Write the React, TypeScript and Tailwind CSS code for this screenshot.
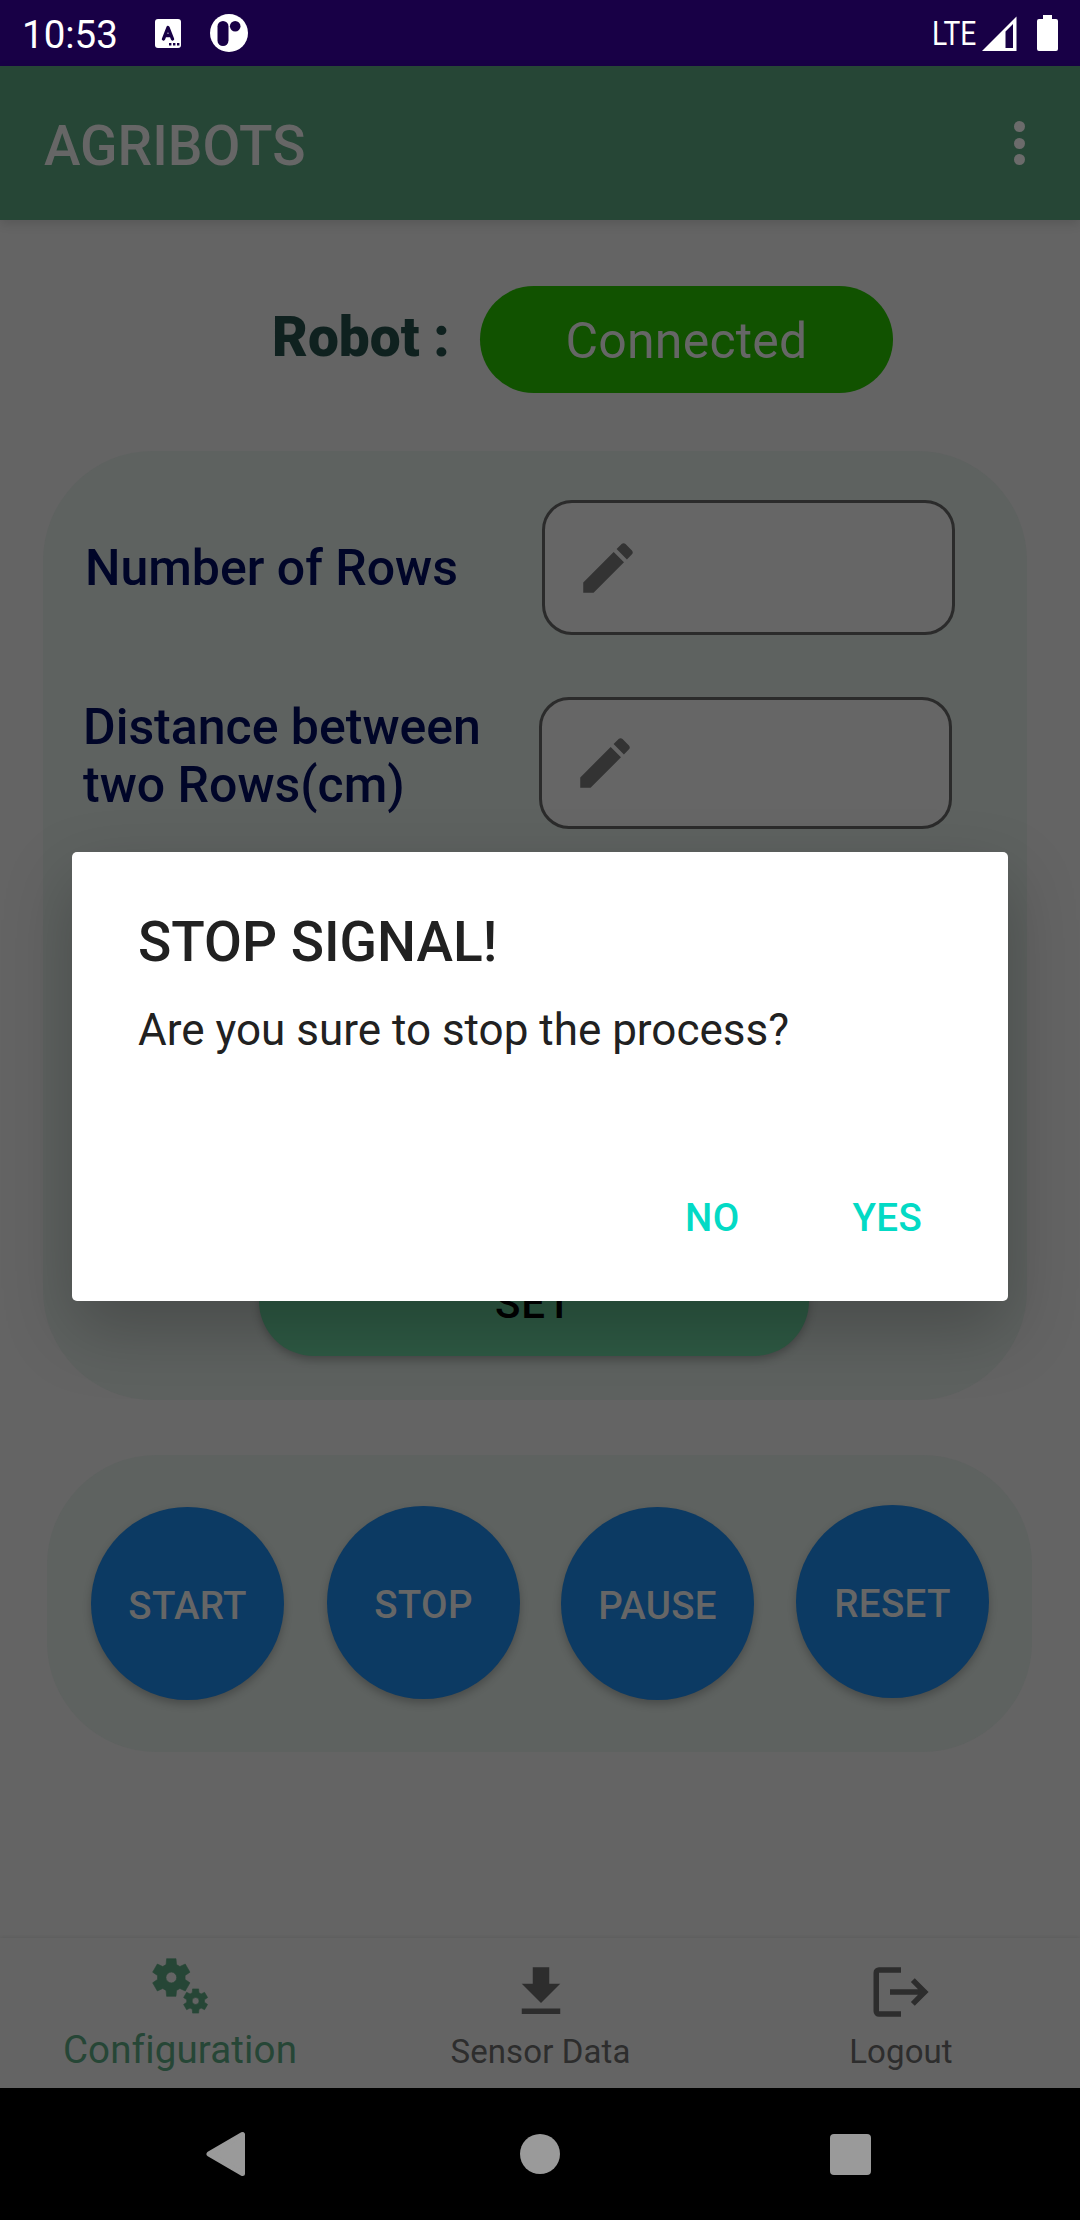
import type { ReactNode } from "react";

/** Outline of a six-toothed gear centred on (cx, cy), scaled by s. */
function gearPath(cx: number, cy: number, s: number) {
  const points: string[] = [];
  const corners: [number, number][] = [
    [14.2, -22],
    [19.8, -14],
    [19.8, 14],
    [14.2, 22],
  ];
  for (let tooth = 0; tooth < 6; tooth++) {
    for (const [r, a] of corners) {
      const t = ((tooth * 60 + a) * Math.PI) / 180;
      points.push(`${(cx + s * r * Math.sin(t)).toFixed(2)} ${(cy - s * r * Math.cos(t)).toFixed(2)}`);
    }
  }
  const h = 5.5 * s;
  return `M${points.join("L")}ZM${cx - h} ${cy}a${h} ${h} 0 1 0 ${2 * h} 0a${h} ${h} 0 1 0 ${-2 * h} 0Z`;
}

function Pencil() {
  return (
    <svg viewBox="0 0 24 24" className="size-[66px] fill-[#333333]">
      <path d="M3 17.25V21h3.75L17.81 9.94l-3.75-3.75L3 17.25zM20.71 7.04c.39-.39.39-1.02 0-1.41l-2.34-2.34c-.39-.39-1.02-.39-1.41 0l-1.83 1.83 3.75 3.75 1.83-1.83z" />
    </svg>
  );
}

function StatusBar() {
  return (
    <div className="flex h-[66px] items-center bg-[#180046] text-white">
      <span className="ml-[22px] w-[98px] pt-[4px] text-[38.5px] leading-none whitespace-nowrap">10:53</span>
      <svg viewBox="0 0 26 29" className="ml-[35px] h-[29px] w-[26px]">
        <rect width="26" height="29" rx="3" fill="white" />
        <path d="M8.5 20 13 8.5 17.5 20M10 16.5h6" fill="none" stroke="#180046" strokeWidth="3.4" strokeLinejoin="round" strokeLinecap="round" />
        <path d="M14 24h2.4v2.4H14zM18 24h2.4v2.4H18zM22 24h2.4v2.4H22z" fill="#180046" />
      </svg>
      <svg viewBox="0 0 38 38" className="ml-[29px] size-[38px]">
        <circle cx="19" cy="19" r="19" fill="white" />
        <rect x="7.5" y="7" width="11" height="25" rx="5.5" fill="#180046" />
        <circle cx="25.2" cy="12.3" r="5.3" fill="#180046" />
      </svg>
      <span className="ml-auto w-[50.5px] origin-left scale-x-[0.83] text-[34px] leading-none">LTE</span>
      <svg viewBox="0 0 35 35" className="h-[35px] w-[35px]">
        <path fillRule="evenodd" d="M0 35 34.5 0.5V35ZM23.5 15.5 31 8V32H23.5Z" fill="white" />
      </svg>
      <svg viewBox="0 0 21 36" className="mr-[22px] ml-[20px] h-[36px] w-[21px]">
        <path d="M6 0h9v4h4a2 2 0 0 1 2 2v28a2 2 0 0 1-2 2H2a2 2 0 0 1-2-2V6a2 2 0 0 1 2-2h4z" fill="white" />
      </svg>
    </div>
  );
}

function AppBar() {
  return (
    <header className="z-10 flex h-[154px] items-center justify-between bg-[#264636] pr-[55px] pl-[44px] text-[#666666] shadow-[0_4px_10px_rgba(0,0,0,0.12)]">
      <h1 className="pt-[6px] text-[55px] leading-none font-medium">AGRIBOTS</h1>
      <div className="flex flex-col gap-[5.5px]">
        <span className="size-[11px] rounded-full bg-[#6b6b6b]" />
        <span className="size-[11px] rounded-full bg-[#6b6b6b]" />
        <span className="size-[11px] rounded-full bg-[#6b6b6b]" />
      </div>
    </header>
  );
}

function RoundButton({ children, className }: { children: ReactNode; className: string }) {
  return (
    <button
      className={`flex size-[193px] shrink-0 items-center justify-center rounded-full bg-[#0c3a63] pt-[4px] text-[38.5px] font-medium tracking-[0.3px] text-[#666666] shadow-[0_4px_8px_rgba(0,0,0,0.24)] ${className}`}
    >
      {children}
    </button>
  );
}

function BottomNav() {
  return (
    <nav className="grid h-[150px] grid-cols-3 bg-[#646464] text-[33px] leading-[40px] text-[#2d2d2d] shadow-[0_-1px_3px_rgba(0,0,0,0.07)]">
      <div className="flex flex-col items-center text-[#264636]">
        <svg viewBox="0 0 66 66" className="mt-[15px] size-[66px]">
          <path
            fillRule="evenodd"
            fill="currentColor"
            stroke="currentColor"
            strokeWidth="0.6"
            strokeLinejoin="round"
            d={gearPath(24.3, 24.5, 0.98) + gearPath(48.6, 48, 0.63)}
          />
        </svg>
        <span className="mt-[11px] text-[38.5px] tracking-[0.15px]">Configuration</span>
      </div>
      <div className="flex flex-col items-center">
        <svg viewBox="0 0 24 24" className="mt-[21px] ml-px size-[66px] fill-current">
          <path d="M19 9h-4V3H9v6H5l7 7 7-7zM5 18v2h14v-2H5z" />
        </svg>
        <span className="mt-[7px] ml-px tracking-[0.1px]">Sensor Data</span>
      </div>
      <div className="flex flex-col items-center">
        <svg viewBox="0 0 24 24" className="mt-[21px] ml-px size-[66px] fill-none stroke-current stroke-2">
          <path d="M12 4H4A1 1 0 0 0 3 5V19A1 1 0 0 0 4 20H12M8 12H20.3M16.3 7.7 20.6 12 16.3 16.3" />
        </svg>
        <span className="mt-[7px] ml-[2px] tracking-[0.1px]">Logout</span>
      </div>
    </nav>
  );
}

function SystemNav() {
  return (
    <div className="flex h-[132px] items-center bg-black text-[#9a9a9a]">
      <svg viewBox="0 0 40 46" className="ml-[206px] h-[46px] w-[40px]">
        <path d="M3 23 36.5 3.5V42.5Z" fill="currentColor" stroke="currentColor" strokeWidth="5" strokeLinejoin="round" />
      </svg>
      <span className="ml-[274px] size-[40px] rounded-full bg-[#9a9a9a]" />
      <span className="mt-[1px] ml-[270px] size-[41px] rounded-[4px] bg-[#9a9a9a]" />
    </div>
  );
}

function StopDialog() {
  return (
    <div
      role="dialog"
      className="absolute top-[852px] left-[72px] z-20 flex h-[449px] w-[936px] flex-col rounded-[5px] bg-white text-[#212121] shadow-[0_28px_70px_rgba(0,0,0,0.24)]"
    >
      <h2 className="mt-[58px] ml-[66px] text-[55px] leading-[64px] font-medium">STOP SIGNAL!</h2>
      <p className="mt-[30px] ml-[66px] text-[44px] leading-[52px]">Are you sure to stop the process?</p>
      <div className="mt-auto mr-[86px] mb-[60px] flex justify-end gap-[113px] text-[38.5px] leading-[46px] font-medium tracking-[0.3px] text-[#03dac5]">
        <button>NO</button>
        <button>YES</button>
      </div>
    </div>
  );
}

export default function App() {
  return (
    <div className="relative flex h-[2220px] w-[1080px] flex-col overflow-hidden bg-[#646464] font-['Roboto',sans-serif]">
      <StatusBar />
      <AppBar />

      <main className="flex flex-1 flex-col">
        <div className="mt-[66px] flex h-[107px] items-start">
          <span className="ml-[272px] w-[208px] pt-[19px] text-[55px] leading-[64px] font-black text-[#0f211f]">Robot :</span>
          <span className="flex h-[107px] w-[413px] items-center justify-center rounded-full bg-[#115200] pt-[4px] text-[50px] tracking-[0.2px] text-[#666666]">
            Connected
          </span>
        </div>

        <section className="mt-[58px] ml-[43px] flex h-[949px] w-[984px] shrink-0 flex-col rounded-[110px] bg-[#5e6260] text-[50px] leading-[58px] font-medium text-[#000528]">
          <div className="mt-[49px] flex h-[135px] items-center">
            <span className="ml-[42px] w-[457px]">Number of Rows</span>
            <div className="flex h-[135px] w-[413px] items-center rounded-[30px] border-3 border-[#2b2b2b] bg-[#666666] pl-[30px]">
              <Pencil />
            </div>
          </div>
          <div className="mt-[62px] flex h-[132px] items-center">
            <span className="ml-[40px] w-[456px] pb-[14px]">
              Distance between
              <br />
              two Rows(cm)
            </span>
            <div className="flex h-[132px] w-[413px] items-center rounded-[30px] border-3 border-[#2b2b2b] bg-[#666666] pl-[30px]">
              <Pencil />
            </div>
          </div>
          <button className="mt-[417px] ml-[216px] flex h-[110px] w-[550px] items-center justify-center rounded-[55px] bg-[#2e5a44] pt-[5px] text-[42px] tracking-[1px] text-black shadow-[0_4px_8px_rgba(0,0,0,0.24)]">
            SET
          </button>
        </section>

        <section className="mt-[55px] ml-[47px] flex h-[297px] w-[985px] shrink-0 rounded-[110px] bg-[#5e6260]">
          <RoundButton className="mt-[52px] ml-[44px]">START</RoundButton>
          <RoundButton className="mt-[51px] ml-[43px]">STOP</RoundButton>
          <RoundButton className="mt-[52px] ml-[41px]">PAUSE</RoundButton>
          <RoundButton className="mt-[50px] ml-[42px]">RESET</RoundButton>
        </section>
      </main>

      <BottomNav />
      <SystemNav />
      <StopDialog />
    </div>
  );
}
